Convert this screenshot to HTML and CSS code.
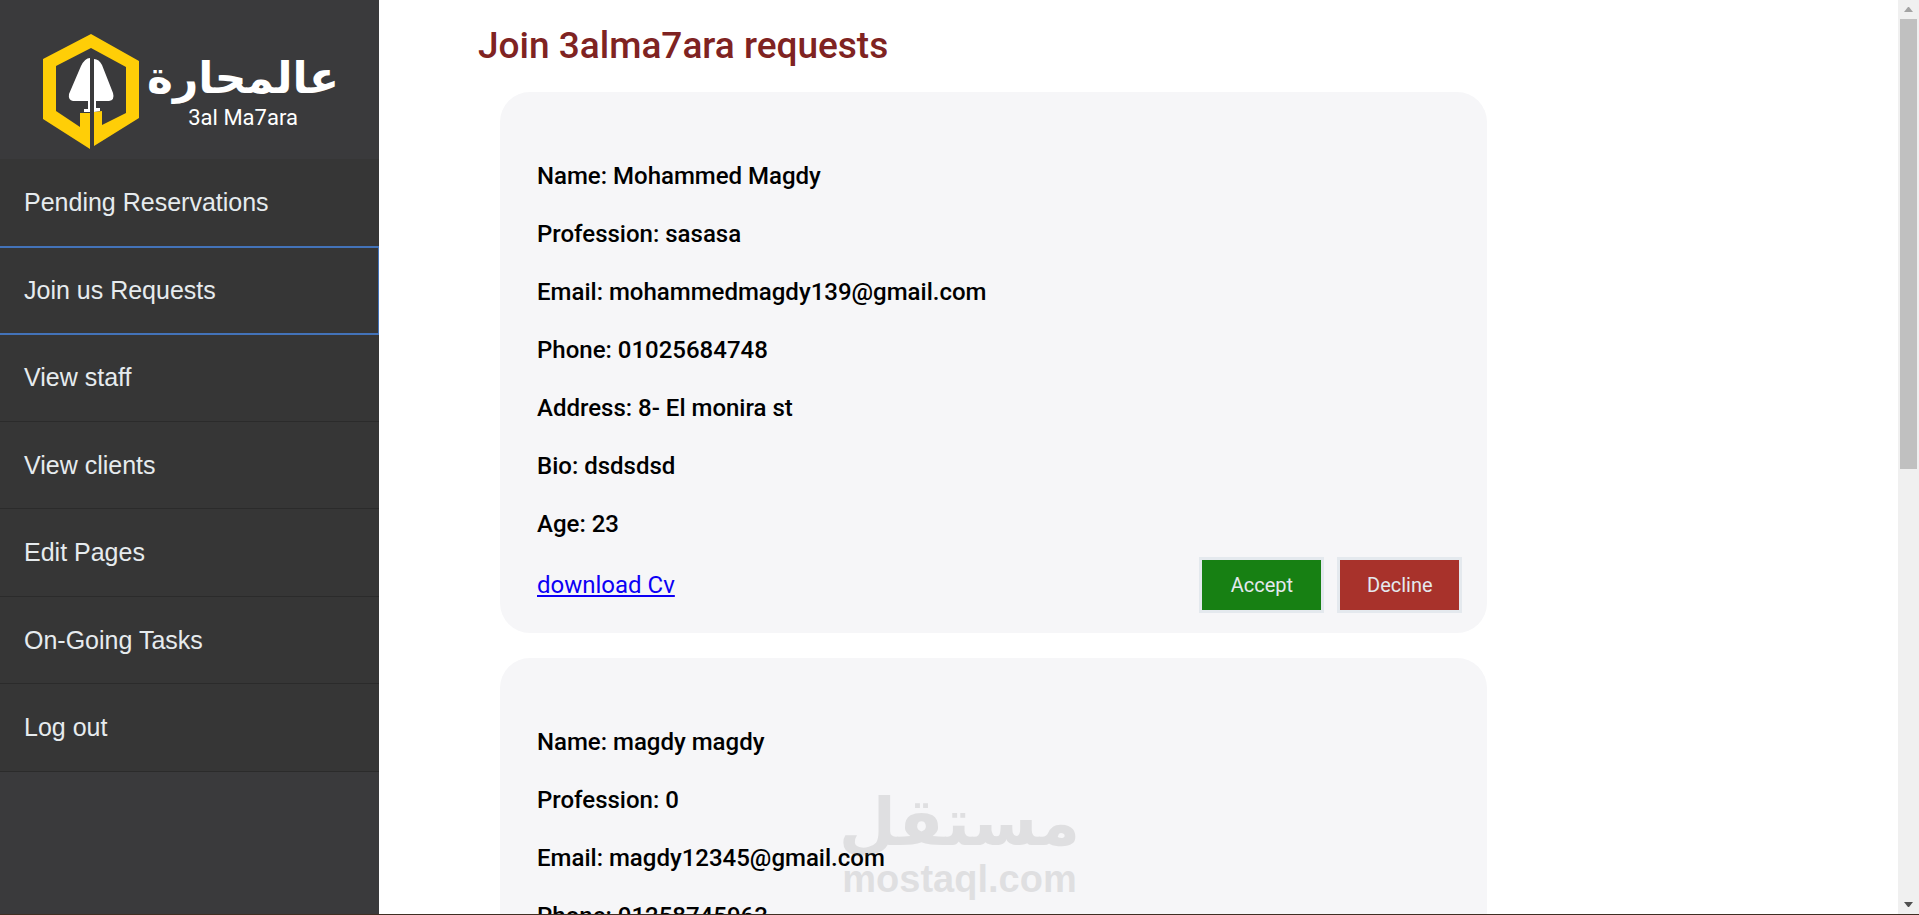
FILE: index.html
```html
<!DOCTYPE html>
<html lang="en">
<head>
    <meta charset="UTF-8">
    <meta name="viewport" content="width=device-width, initial-scale=1.0">
    <title>Join Requests</title>
    <link rel="stylesheet" href="styles.css">
</head>
<body>

    <aside class="sidebar">
        <a class="logo" href="#" aria-label="3al Ma7ara">
            <svg class="logo-mark" viewBox="0 0 96 115" width="96" height="115" aria-hidden="true">
                <g fill="#ffce07">
                    <path d="M48 0 96 27V84L51 112V78L59 77V91L83 79V33L48 14 13 32V77L37 93V79H47V115L0 85V25Z"/>
                </g>
                <g fill="#fff">
                    <path d="M47 24V78H41V75H45V67H30Q25 66 26 60L38 32Q42 24 47 24Z"/>
                    <path d="M51 25Q56 25 59 31L70 59Q72 66 66 67H53V74H57V77L51 78Z"/>
                </g>
            </svg>
            <span class="logo-text">
                <span class="logo-ar" lang="ar" dir="rtl">عالمحارة</span>
                <span class="logo-en">3al Ma7ara</span>
            </span>
        </a>
        <nav class="menu">
            <a href="#">Pending Reservations</a>
            <a href="#" class="active">Join us Requests</a>
            <a href="#">View staff</a>
            <a href="#">View clients</a>
            <a href="#">Edit Pages</a>
            <a href="#">On-Going Tasks</a>
            <a href="#">Log out</a>
        </nav>
    </aside>

    <main class="content">
        <h1>Join 3alma7ara requests</h1>

        <section class="card">
            <p>Name: Mohammed Magdy</p>
            <p>Profession: sasasa</p>
            <p>Email: mohammedmagdy139@gmail.com</p>
            <p>Phone: 01025684748</p>
            <p>Address: 8- El monira st</p>
            <p>Bio: dsdsdsd</p>
            <p>Age: 23</p>
            <div class="card-footer">
                <a href="#">download Cv</a>
                <div class="actions">
                    <button type="button" class="accept">Accept</button>
                    <button type="button" class="decline">Decline</button>
                </div>
            </div>
        </section>

        <section class="card">
            <p>Name: magdy magdy</p>
            <p>Profession: 0</p>
            <p>Email: magdy12345@gmail.com</p>
            <p>Phone: 01258745963</p>
        </section>
    </main>

    <!-- scroll track -->
    <div class="scroll" aria-hidden="true">
        <svg viewBox="0 0 9 5" width="9" height="5"><path fill="#a3a3a3" d="M4 0h1l4 5H0z"/></svg>
        <div class="thumb"></div>
        <svg viewBox="0 0 9 5" width="9" height="5"><path fill="#505050" d="M0 0h9L5 5H4z"/></svg>
    </div>

    <div class="watermark">
        <span class="watermark-ar" lang="ar" dir="rtl">مستقل</span>
        <span class="watermark-en">mostaql.com</span>
    </div>

</body>
</html>
```
FILE: styles.css
```css
* {
    box-sizing: border-box;
}

body {
    display: flex;
    height: 100vh;
    margin: 0;
    overflow: hidden;
    background: #fff;
    border-bottom: 1px solid #402e23;
    font-family: Roboto, sans-serif;
    color: #000;
}

/* Sidebar */
.sidebar {
    flex: 0 0 379px;
    background: #3a3a3c;
    font-family: "Liberation Sans", Arial, sans-serif;
}

.logo {
    display: flex;
    gap: 8px;
    height: 159px;
    padding: 34px 0 0 43px;
    color: #fff;
    text-decoration: none;
}

.logo-mark {
    flex: none;
}

.logo-text {
    display: flex;
    flex-direction: column;
    align-items: center;
    padding-top: 16px;
}

.logo-ar {
    font: bold 44px/56px "DejaVu Sans", sans-serif;
    white-space: nowrap;
}

.logo-en {
    font: 22px/24px Roboto, sans-serif;
}

.menu {
    display: grid;
    grid-auto-rows: 1fr;
    min-height: 67vh;
}

.menu a {
    display: flex;
    align-items: center;
    padding: 0 24px;
    background: #363636;
    border-bottom: 1px solid #2b2b2b;
    color: #e6ebee;
    font-size: 25px;
    text-decoration: none;
}

.menu a.active {
    z-index: 1;
    margin: -1px 0;
    border: 2px solid #4373b9;
    border-width: 2px 1px 2px 0;
}

/* Requests */
.content {
    flex: 1;
    padding-top: 16px;
    overflow: hidden;
}

h1 {
    margin: 0 0 16px 99px;
    font-size: 37px;
    line-height: 60px;
    font-weight: 500;
    color: #7f2322;
}

.card {
    width: 65%;
    min-height: 541px;
    margin: 0 0 25px 121px;
    padding: 67px 25px 19px 37px;
    background: #f6f6f8;
    border-radius: 30px;
    font-size: 24px;
    line-height: 34px;
}

.card p {
    margin: 0 0 24px;
    font-weight: 500;
}

.card-footer {
    display: flex;
    justify-content: space-between;
    align-items: center;
    margin-top: -8px;
}

.card-footer a {
    color: #0d00f5;
}

.actions {
    display: flex;
    gap: 13px;
}

.actions button {
    width: 125px;
    height: 56px;
    border: 3px solid #e4e9ee;
    font-family: inherit;
    font-size: 20px;
    color: #e4e9ee;
}

.actions .accept {
    background: #178013;
}

.actions .decline {
    background: #a8322b;
}

/* Scroll track */
.scroll {
    flex: 0 0 21px;
    display: flex;
    flex-direction: column;
    align-items: center;
    padding: 7px 2px;
    background: #f0f0f0;
}

.thumb {
    width: 100%;
    height: 50%;
    margin: 7px 0 auto;
    background: #c0c0c0;
}

/* Watermark over the page */
.watermark {
    position: absolute;
    left: 50%;
    bottom: 16px;
    display: flex;
    flex-direction: column;
    align-items: center;
    transform: translateX(-50%);
    color: #888;
    opacity: 0.2;
    pointer-events: none;
}

.watermark-ar {
    font: bold 66px/72px "DejaVu Sans", sans-serif;
}

.watermark-en {
    font: bold 38px/40px "Liberation Sans", Arial, sans-serif;
}
```
